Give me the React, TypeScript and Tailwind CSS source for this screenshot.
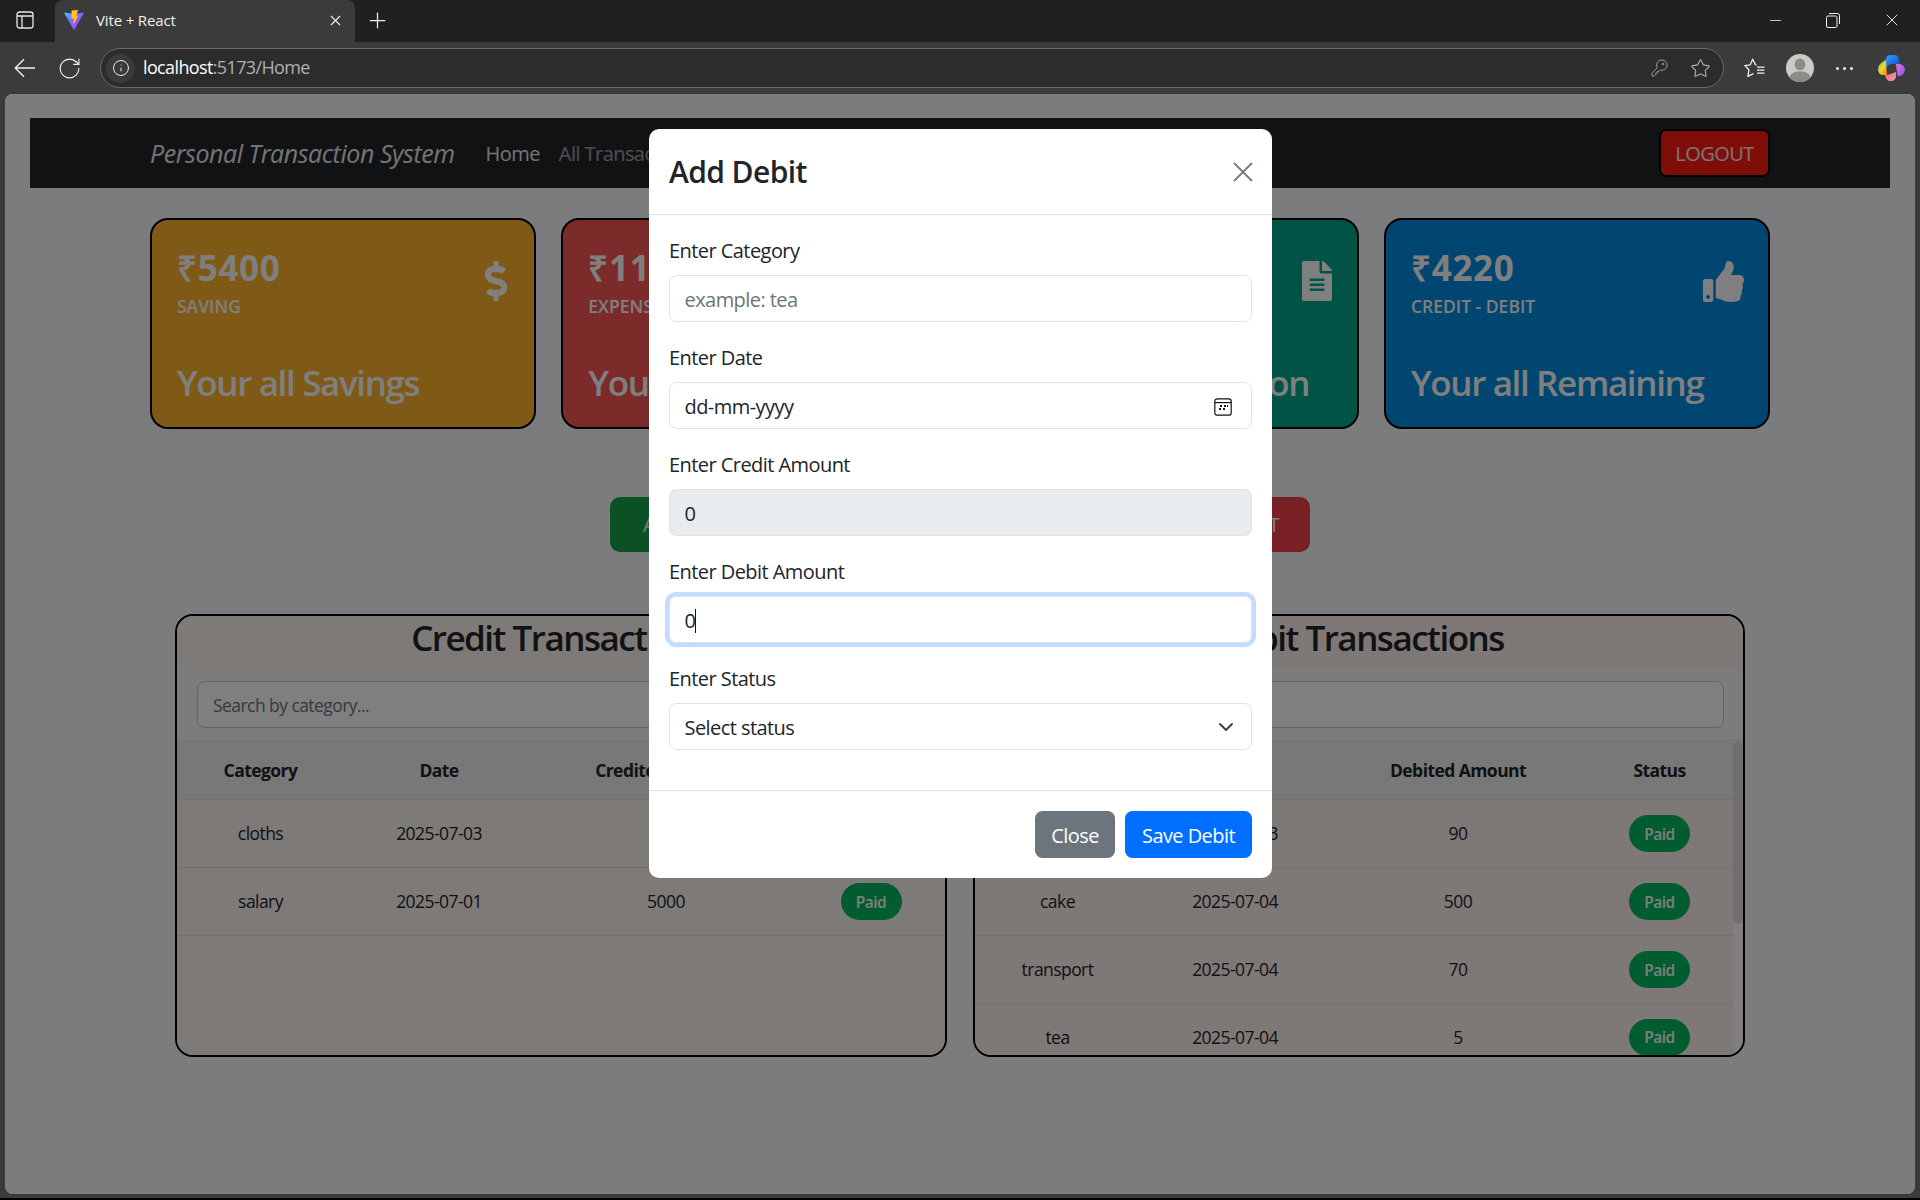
import { RotateCw, Info, Star, X, Plus, Minus } from "lucide-react";
import { FaDollarSign, FaFileAlt, FaThumbsUp } from "react-icons/fa";

function PanelIcon() {
  return (
    <svg width="18" height="18" viewBox="0 0 18 18" fill="none" stroke="#e8e8e8" strokeWidth="1.3">
      <rect x="1" y="1" width="16" height="16" rx="2.5" />
      <path d="M1 5h16M6 5v12" />
    </svg>
  );
}

function ViteLogo() {
  return (
    <svg width="20" height="20" viewBox="0 0 20 20">
      <defs>
        <linearGradient id="vg" x1="0" y1="0" x2="1" y2="1">
          <stop offset="0" stopColor="#41d1ff" />
          <stop offset="0.4" stopColor="#7b6cff" />
          <stop offset="1" stopColor="#bd34fe" />
        </linearGradient>
      </defs>
      <path d="M0 2.5 L7 3.5 L13 3.5 L20 2.5 L10.5 19.6 Q10 20.3 9.5 19.6 Z" fill="url(#vg)" />
      <path d="M7.5 0.6 L14 0 L12.2 6 L14.5 5.5 L8.8 15.5 L10 8.5 L7.5 9 Z" fill="#ffc517" />
    </svg>
  );
}

function BackArrow() {
  return (
    <svg width="22" height="20" viewBox="0 0 22 20" fill="none" stroke="#f0f0f0" strokeWidth="1.3" strokeLinejoin="round">
      <path d="M1.2 10H21M10 1.2L1.2 10l8.8 8.8" />
    </svg>
  );
}

function KeyIcon() {
  return (
    <svg width="17" height="18" viewBox="0 0 17 18" fill="none" stroke="#9a9a9a" strokeWidth="1">
      <path d="M11 1a5 5 0 0 1 0 10.2c-.6 0-1.2-.1-1.7-.3L8 12.4H6.4v1.7H4.7v1.6l-1.2 1.2H1v-2.8l5.3-5.4A5 5 0 0 1 11 1Z" strokeLinejoin="round" />
      <circle cx="12" cy="5" r="0.9" />
    </svg>
  );
}

function Restore() {
  return (
    <svg width="14" height="15" viewBox="0 0 14 15" fill="none" stroke="#f2f2f2" strokeWidth="1">
      <rect x="0.5" y="3" width="10.5" height="11.5" rx="1.5" />
      <path d="M3 0.5h8.5a2 2 0 0 1 2 2V11" />
    </svg>
  );
}

function FavIcon() {
  return (
    <svg width="21" height="20" viewBox="0 0 21 20" fill="none" stroke="#f0f0f0" strokeWidth="1.3" strokeLinejoin="round">
      <path d="M12.6 7 L11.4 6.6 L8.7 1.2 L6.2 6.8 L0.9 7.6 L4.9 11.8 L3.9 18.4 L9.4 15.6" />
      <path d="M13 9.2h7.5M13 12.2h7.5M13 15.2h7.5" />
    </svg>
  );
}

function Avatar() {
  return (
    <svg width="28" height="28" viewBox="0 0 28 28">
      <circle cx="14" cy="14" r="14" fill="#cbcac5" />
      <ellipse cx="14" cy="10.5" rx="5.3" ry="6" fill="#8d8b87" />
      <path d="M3.5 23.5 C5 18.5 9 17.5 14 17.5 C19 17.5 23 18.5 24.5 23.5 C22 26.5 18 28 14 28 C10 28 6 26.5 3.5 23.5Z" fill="#8d8b87" />
    </svg>
  );
}

function Copilot() {
  return (
    <svg width="27" height="26" viewBox="0 0 27 26">
      <defs>
        <linearGradient id="c1" x1="0" y1="0" x2="1" y2="1">
          <stop offset="0" stopColor="#1fb6f5" />
          <stop offset="0.5" stopColor="#2b6fe8" />
          <stop offset="1" stopColor="#1b3fa0" />
        </linearGradient>
        <linearGradient id="c2" x1="0" y1="0" x2="1" y2="1">
          <stop offset="0" stopColor="#35d07f" />
          <stop offset="0.5" stopColor="#f5d327" />
          <stop offset="1" stopColor="#f57c1f" />
        </linearGradient>
        <linearGradient id="c3" x1="0" y1="0" x2="1" y2="1">
          <stop offset="0" stopColor="#e86bd8" />
          <stop offset="1" stopColor="#7a5cf0" />
        </linearGradient>
        <linearGradient id="c4" x1="0" y1="0" x2="1" y2="1">
          <stop offset="0" stopColor="#f75a5a" />
          <stop offset="1" stopColor="#f0a0d0" />
        </linearGradient>
      </defs>
      <path d="M9 1 Q11 0 14 0 L17 0 Q20 0 21 4 L22 9 L13 9 Q9 10 8 14 L6 9 Z" fill="url(#c1)" />
      <path d="M6 6 Q8 4 8 8 L9 20 L5 20 Q1 20 0 15 Q0 9 6 6 Z" fill="url(#c2)" />
      <path d="M18 9 L22 9 Q26 10 27 14 Q27 19 22 21 Q19 22 19 18 Z" fill="url(#c3)" />
      <path d="M9 20 L18 17 L18 22 Q17 26 13 26 L11 26 Q8 25 7 20 Z" fill="url(#c4)" />
    </svg>
  );
}

function BrowserChrome() {
  return (
    <>
      <div className="h-[42px] bg-[#202020] flex items-start text-white shrink-0">
        <div className="w-[55px] h-[40px] flex items-center pl-[16px]"><PanelIcon /></div>
        <div className="w-[300px] h-[42px] pb-[2px] bg-[#3b3b3b] rounded-t-[8px] flex items-center pl-[9px] pr-[11px] gap-[12px]">
          <ViteLogo />
          <span className="text-[15px] flex-1 tracking-[-0.01em] text-[#f0f0f0]">Vite + React</span>
          <X size={17} strokeWidth={1.6} className="text-[#f0f0f0]" />
        </div>
        <div className="w-[44px] h-[40px] flex items-center justify-center"><Plus size={25} strokeWidth={1.2} className="text-[#f0f0f0]" /></div>
        <div className="flex-1" />
        <div className="flex items-center h-[40px] text-[#f2f2f2] pr-[18px] gap-[42px]">
          <Minus size={17} strokeWidth={1.1} />
          <Restore />
          <X size={20} strokeWidth={1.1} />
        </div>
      </div>
      <div className="h-[52px] bg-[#3b3b3b] flex items-center shrink-0 text-[#f0f0f0]">
        <div className="w-[100px] flex items-center pl-[14px] gap-[21px]">
          <BackArrow />
          <RotateCw size={25} strokeWidth={1.1} />
        </div>
        <div className="w-[1624px] h-[40px] bg-[#2c2c2c] border border-[#6a6a6a] rounded-[20px] flex items-center pl-[5px] pr-[12px]">
          <div className="w-[29px] h-[29px] rounded-full bg-[#3a3a3a] flex items-center justify-center mr-[8px]"><Info size={18} strokeWidth={1.3} className="text-[#e8e8e8]" /></div>
          <span className="text-[18px] leading-[24px] pb-[2px] tracking-[-0.035em]"><span className="text-white">localhost</span><span className="text-[#b0b0b0]">:5173/Home</span></span>
          <div className="flex-1" />
          <div className="mr-[22px] flex"><KeyIcon /></div>
          <Star size={21} strokeWidth={1.2} className="text-[#b5b5b5]" />
        </div>
        <div className="flex items-center pl-[20px] gap-[21px]">
          <FavIcon />
          <Avatar />
          <span className="flex gap-[4px] w-[16px] ml-[1px] mr-[5px]">
            <i className="w-[3px] h-[3px] rounded-full bg-[#f0f0f0] block shrink-0" />
            <i className="w-[3px] h-[3px] rounded-full bg-[#f0f0f0] block shrink-0" />
            <i className="w-[3px] h-[3px] rounded-full bg-[#f0f0f0] block shrink-0" />
          </span>
          <Copilot />
        </div>
      </div>
    </>
  );
}

function StatCard({ value, label, foot, bg, icon }: { value: string; label: string; foot: string; bg: string; icon: React.ReactNode }) {
  return (
    <div className={`w-[386px] h-[211px] border-2 border-black rounded-[18px] text-white pl-[25px] pr-[24px] pt-[27px] flex flex-col ${bg}`}>
      <div className="flex justify-between items-start">
        <div>
          <div className="text-[35px] leading-[42px] font-bold tracking-[0.02em]">{value}</div>
          <div className="text-[17.5px] leading-[26px] mt-[4px] font-semibold tracking-normal">{label}</div>
        </div>
        <div className="h-[42px] mt-[14px] flex items-start justify-end">{icon}</div>
      </div>
      <div className="text-[35px] leading-[42px] font-semibold mt-[43px] whitespace-nowrap tracking-[-0.039em]">{foot}</div>
    </div>
  );
}

function Pill() {
  return <span className="w-[61px] h-[37px] pt-[2px] rounded-full bg-[#03bb5e] text-white text-[15.5px] font-semibold flex items-center justify-center">Paid</span>;
}

const cols = "grid grid-cols-[167px_190px_264px_146px]";
const colsR = "grid grid-cols-[165px_190px_256px_147px]";

function TransactionCard({ title, amountLabel, rows, tint, grid, scroll }: { title: string; amountLabel: string; rows: string[][]; tint: string; grid: string; scroll?: boolean }) {
  return (
    <div className="w-[772px] h-[443px] border-2 border-black rounded-[18px] overflow-hidden flex flex-col">
      <div className={`h-[52px] shrink-0 text-center text-[35px] leading-[44px] font-semibold tracking-[-0.043em] text-[#212529] ${tint}`}>{title}</div>
      <div className="h-[73px] shrink-0 pl-[20px] pr-[19px] pt-[13px] border-b-[1.5px] border-[#dee2e6]">
        <input placeholder="Search by category..." className="w-full h-[47px] bg-white border border-[#c8cacc] rounded-[7.5px] px-[15px] text-[17.5px] placeholder:text-[#6c757d] outline-none" />
      </div>
      <div className="flex flex-1 min-h-0 overflow-hidden">
        <div className="flex-1 min-w-0">
          <div className={`${grid} h-[59px] bg-[#f0f0f0] border-b border-[#dee2e6] items-center text-center text-[17.5px] font-bold text-[#212529]`}>
            <div>Category</div>
            <div>Date</div>
            <div>{amountLabel}</div>
            <div>Status</div>
          </div>
          {rows.map((r, i) => (
            <div key={i} className={`${grid} h-[67.9px] border-b border-[#e4e1de] items-center text-center text-[17.5px] text-[#212529] ${tint}`}>
              <div>{r[0]}</div>
              <div>{r[1]}</div>
              <div>{r[2]}</div>
              <div className="flex justify-center"><Pill /></div>
            </div>
          ))}
          {!scroll && <div className={`h-full ${tint}`} />}
        </div>
        {scroll && (
          <div className="w-[10px] shrink-0 bg-[#fff] flex justify-center">
            <div className="w-[10px] h-[183px] rounded-[5px] bg-[#dcdcdc]" />
          </div>
        )}
      </div>
    </div>
  );
}

function Field({ label, children }: { label: string; children: React.ReactNode }) {
  return (
    <div className="mb-[20px]">
      <div className="text-[20px] leading-[32px] mb-[8px] text-[#212529]">{label}</div>
      {children}
    </div>
  );
}

const box = "w-full h-[47px] pt-[2px] border border-[#dee2e6] rounded-[7.5px] pl-[14.5px] pr-[15px] text-[20px] text-[#212529] flex items-center outline-none";

function Modal() {
  return (
    <div className="absolute left-[644px] top-[35px] w-[623px] h-[749px] bg-white rounded-[10px] flex flex-col">
      <div className="h-[86px] shrink-0 border-b border-[#dee2e6] pl-[20px] pr-[19px] flex items-center justify-between">
        <div className="text-[30px] leading-[45px] font-semibold tracking-[-0.02em] text-[#212529]">Add Debit</div>
        <svg width="20" height="20" viewBox="0 0 20 20" fill="none" stroke="#787b7e" strokeWidth="1.8"><path d="M1 1l18 18M19 1L1 19" /></svg>
      </div>
      <div className="px-[20px] pt-[20px] h-[576px] shrink-0 border-b border-[#dee2e6]">
        <Field label="Enter Category">
          <input placeholder="example: tea" className={`${box} pt-0 placeholder:text-[#6c757d]`} />
        </Field>
        <Field label="Enter Date">
          <div className={`${box} justify-between pr-[19px]`}>
            <span>dd-mm-yyyy</span>
            <svg width="18" height="18" viewBox="0 0 18 18" fill="none" stroke="#111" strokeWidth="1.2">
              <rect x="0.8" y="0.8" width="16.4" height="16.4" rx="2.5" />
              <path d="M0.8 4.6h16.4" />
              <path d="M6 8h2M10 8h2M13 8h1M5 11h2M9 11h2" strokeWidth="1.8" />
            </svg>
          </div>
        </Field>
        <Field label="Enter Credit Amount">
          <div className={`${box} bg-[#e9ecef]`}>0</div>
        </Field>
        <Field label="Enter Debit Amount">
          <div className={`${box} border-[#86b7fe] shadow-[0_0_0_4px_rgba(13,110,253,0.25)]`}>
            <span>0</span>
            <span className="w-px h-[24px] bg-[#111]" />
          </div>
        </Field>
        <Field label="Enter Status">
          <div className={`${box} justify-between pr-[18px]`}>
            <span>Select status</span>
            <svg width="14" height="9" viewBox="0 0 14 9" fill="none" stroke="#343a40" strokeWidth="1.8" strokeLinecap="round" strokeLinejoin="round"><path d="M1 1l6 6 6-6" /></svg>
          </div>
        </Field>
      </div>
      <div className="flex-1 flex items-start pt-[20px] justify-end px-[20px] gap-[10px]">
        <div className="w-[80px] h-[47px] pt-[3px] rounded-[7.5px] bg-[#6c757d] text-white text-[20px] flex items-center justify-center">Close</div>
        <div className="w-[127px] h-[47px] pt-[3px] rounded-[7.5px] bg-[#006fff] text-white text-[20px] flex items-center justify-center">Save Debit</div>
      </div>
    </div>
  );
}

const creditRows = [
  ["cloths", "2025-07-03", "400"],
  ["salary", "2025-07-01", "5000"],
];
const debitRows = [
  ["tea", "2025-07-03", "90"],
  ["cake", "2025-07-04", "500"],
  ["transport", "2025-07-04", "70"],
  ["tea", "2025-07-04", "5"],
];

export default function App() {
  return (
    <div className="w-[1920px] h-[1200px] bg-[#3b3b3b] flex flex-col overflow-hidden font-['Open_Sans',sans-serif] tracking-[-0.035em]">
      <BrowserChrome />
      <div className="relative mx-[5px] h-[1100px] shrink-0 rounded-[8px] bg-[#f6f8fc] overflow-hidden">
        <div className="mx-[25px] mt-[24px] h-[70px] pt-[2px] bg-[#212529] flex justify-center">
          <div className="w-[1620px] flex items-center">
            <div className="text-[25px] italic text-white/90 mr-[31px] tracking-[-0.018em]">Personal Transaction System</div>
            <div className="text-[20px] text-white/90 mr-[19px]">Home</div>
            <div className="text-[20px] text-white/55">All Transactions</div>
            <div className="flex-1" />
            <div className="w-[111px] h-[48px] -mt-[2px] pt-[2px] rounded-[7.5px] border-2 border-black bg-[#ff1c10] text-white/90 text-[20px] flex items-center justify-center">LOGOUT</div>
          </div>
        </div>

        <div className="w-[1620px] mx-auto mt-[30px] flex justify-between">
          <StatCard value="₹5400" label="SAVING" foot="Your all Savings" bg="bg-[#feb42c]" icon={<FaDollarSign size={40} className="-mr-[6px]" />} />
          <StatCard value="₹1180" label="EXPENSE" foot="Your all Expense" bg="bg-[#f85654]" icon={<FaDollarSign size={40} className="-mr-[6px]" />} />
          <StatCard value="₹6580" label="TRANSACTION" foot="Your all Transaction" bg="bg-[#00a98d]" icon={<FaFileAlt size={40} className="-mr-[4px]" />} />
          <StatCard value="₹4220" label="CREDIT - DEBIT" foot="Your all Remaining" bg="bg-[#008ce0]" icon={<FaThumbsUp size={41} />} />
        </div>

        <div className="w-[700px] mx-auto mt-[68px] flex justify-between text-white text-[20px]">
          <div className="h-[55px] px-[33px] rounded-[10px] bg-[#16a34a] flex items-center">ADD CREDIT</div>
          <div className="h-[55px] px-[31px] rounded-[10px] bg-[#f04048] flex items-center">ADD DEBIT</div>
        </div>

        <div className="w-[1570px] mx-auto mt-[62px] flex justify-between">
          <TransactionCard title="Credit Transactions" amountLabel="Credited Amount" rows={creditRows} tint="bg-[#fbf4f0]" grid={cols} />
          <TransactionCard title="Debit Transactions" amountLabel="Debited Amount" rows={debitRows} tint="bg-[#fdf0ef]" grid={colsR} scroll />
        </div>

        <div className="absolute inset-0 bg-black/50" />
        <Modal />
      </div>
      <div className="h-[4px] shrink-0" />
      <div className="h-[2px] shrink-0 bg-black" />
    </div>
  );
}
